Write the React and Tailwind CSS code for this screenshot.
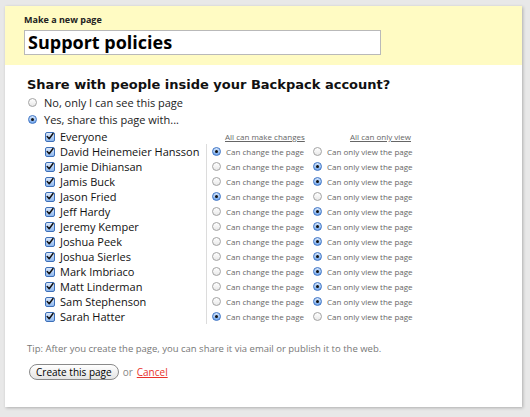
const members = [
  { name: "David Heinemeier Hansson", change: true },
  { name: "Jamie Dihiansan", change: false },
  { name: "Jamis Buck", change: false },
  { name: "Jason Fried", change: true },
  { name: "Jeff Hardy", change: false },
  { name: "Jeremy Kemper", change: false },
  { name: "Joshua Peek", change: false },
  { name: "Joshua Sierles", change: false },
  { name: "Mark Imbriaco", change: false },
  { name: "Matt Linderman", change: false },
  { name: "Sam Stephenson", change: false },
  { name: "Sarah Hatter", change: true },
];

const BODY = { fontFamily: '"Open Sans", "Noto Sans", sans-serif' };
const HEAD = { fontFamily: '"DejaVu Sans", "Noto Sans", sans-serif' };

const Radio = ({ on }) => (
  <span
    className={`inline-flex h-[9px] w-[9px] shrink-0 items-center justify-center rounded-full border ${
      on
        ? "border-[#3d73c4] bg-gradient-to-b from-[#d4e5fb] to-[#74a8ec]"
        : "border-[#a3a3a3] bg-gradient-to-b from-white to-[#e8e8e8]"
    }`}
  >
    {on && <span className="h-[3px] w-[3px] rounded-full bg-[#111]" />}
  </span>
);

const Check = () => (
  <span className="inline-flex h-[10px] w-[10px] shrink-0 items-center justify-center rounded-[2px] border border-[#3d6fb8] bg-gradient-to-b from-[#dde9fa] to-[#8db7ee]">
    <svg viewBox="0 0 10 10" className="h-[9px] w-[9px]" aria-hidden="true">
      <path d="M1.5 5 L4 7.8 L8.8 1.2" fill="none" stroke="#111" strokeWidth="1.8" strokeLinecap="round" strokeLinejoin="round" />
    </svg>
  </span>
);

const App = () => {
  return (
    <div className="h-[417px] w-[530px] overflow-hidden bg-[#e8e8e8] pl-[5px] pt-[6px]" style={BODY}>
      <div className="h-[401px] w-[517px] bg-white shadow-[1px_1px_3px_rgba(0,0,0,0.25)]">
        <div className="h-[59px] bg-[#fffbc3] pl-[19px] pt-[8px]">
          <p className="text-[9px] font-bold leading-[12px] text-[#222]">Make a new page</p>
          <div className="mt-[4px] h-[25px] w-[357px] border border-[#b9b9b9] bg-white pl-[3px] text-[18px] font-bold leading-[23px] text-black">
            Support policies
          </div>
        </div>

        <div className="pl-[22px] pt-[11px]">
          <h2 className="text-[13px] font-bold leading-[17px] text-[#111]" style={HEAD}>
            Share with people inside your Backpack account?
          </h2>
          <div className="mt-[1px] flex h-[17px] items-center gap-[7px] pl-[1px] text-[11px] leading-[17px] text-[#222]">
            <Radio on={false} />
            <span>No, only I can see this page</span>
          </div>
          <div className="flex h-[17px] items-center gap-[7px] pl-[1px] text-[11px] leading-[17px] text-[#222]">
            <Radio on />
            <span>Yes, share this page with...</span>
          </div>

          <div className="ml-[18px] mt-[1px] grid grid-cols-[161px_auto]">
            <div className="flex h-[15px] items-center gap-[5px] text-[11px] leading-[15px] text-[#111]">
              <Check />
              <span>Everyone</span>
            </div>
            <div className="flex h-[15px] w-[205px] items-center justify-between whitespace-nowrap pl-[19px] text-[8px] leading-[15px] text-[#666] underline">
              <span>All can make changes</span>
              <span>All can only view</span>
            </div>

            {members.map((m) => (
              <div key={m.name} className="contents">
                <div className="flex h-[15px] items-center gap-[5px] text-[11px] leading-[15px] text-[#111]">
                  <Check />
                  <span className="whitespace-nowrap">{m.name}</span>
                </div>
                <div className="flex h-[15px] items-center border-l border-[#dcdcdc] pl-[5px] text-[8px] leading-[15px] text-[#666]">
                  <Radio on={m.change} />
                  <span className="ml-[5px] w-[87px] whitespace-nowrap">Can change the page</span>
                  <Radio on={!m.change} />
                  <span className="ml-[5px] whitespace-nowrap">Can only view the page</span>
                </div>
              </div>
            ))}
          </div>

          <p className="mt-[17px] text-[9.5px] leading-[15px] text-[#777]">
            Tip: After you create the page, you can share it via email or publish it to the web.
          </p>

          <div className="mt-[8px] flex items-center gap-[4px] pl-[2px] text-[10px]">
            <button
              type="button"
              className="h-[16px] rounded-full border border-[#8a8a8a] bg-gradient-to-b from-white to-[#e4e4e4] px-[6px] text-[10px] leading-[14px] text-black"
            >
              Create this page
            </button>
            <span className="text-[#888]">or</span>
            <a href="#" className="text-[#e8332b] underline">
              Cancel
            </a>
          </div>
        </div>
      </div>
    </div>
  );
};

export default App;
